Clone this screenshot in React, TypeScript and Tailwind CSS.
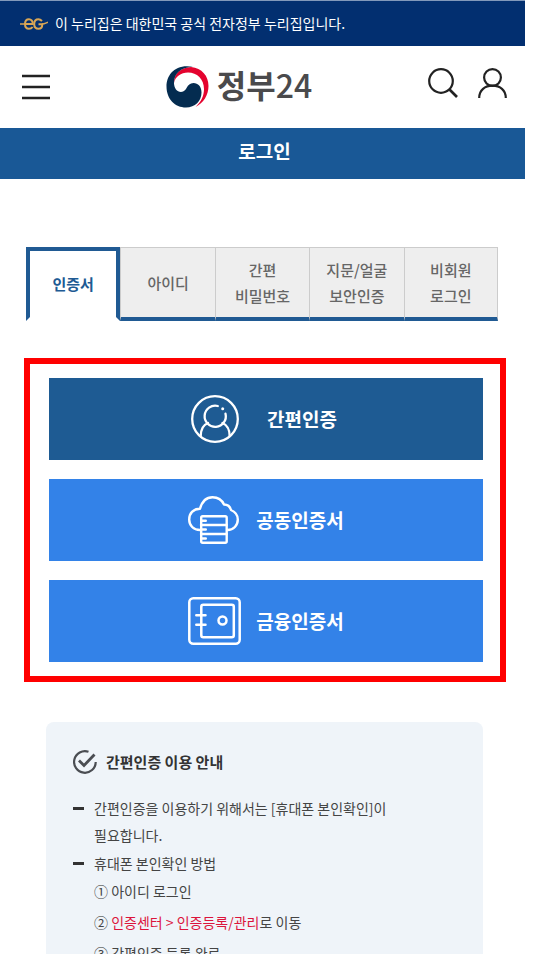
import type { ReactNode } from "react";

const tabs = ["인증서", "아이디", "간편\n비밀번호", "지문/얼굴\n보안인증", "비회원\n로그인"];

const EgMark = () => (
  <svg className="w-7 h-3 shrink-0" viewBox="0 0 28 12" fill="none" stroke="#d9a655" strokeWidth="2" aria-hidden="true">
    <path d="M5 6H12.800C12.800 3 11 1.200 9 1.200C6.500 1.200 5 3.200 5 6C5 8.800 6.500 10.800 9 10.800C10.500 10.800 11.700 10.200 12.600 9" />
    <path d="M22 3C21 2 20 1.200 18.500 1.200C15.800 1.200 14.200 3.200 14.200 6C14.200 8.800 15.800 10.800 18.500 10.800C21 10.800 22.300 8.800 22.300 6.200H18.500" />
    <path d="M0 6H5M22 6C24.500 6 25.500 5.200 28 4.200" strokeWidth="1.500" />
  </svg>
);

const Emblem = () => (
  <svg className="w-[43px] h-[42px]" viewBox="0 0 43 42" aria-hidden="true">
    <path d="M8 17C8 8 14 1.500 25 1C36 2 42.500 10 42.500 20C42.500 29 37.500 37 29.500 41C35 36 38 30 38 23C38 13 31 6.500 22 6.500C15 6.500 9 11 8 17Z" fill="#e4032e" />
    <path d="M27 0.800C9 -2.500 0.500 9 0.500 20.500C0.500 33 9 41.500 20 41.500C29 41.500 35.500 35 35.500 26.500C35.500 20.500 32 17 27.500 17C20 17 21.500 26 15 26C11 26 8 22 8 17C8 8 14 1.500 27 0.800Z" fill="#042c50" />
  </svg>
);

const PersonIcon = () => (
  <svg className="w-12 h-12" viewBox="0 0 48 48" fill="none" stroke="white" strokeWidth="2.300" strokeLinecap="round" aria-hidden="true">
    <circle cx="24" cy="24" r="22.800" />
    <path d="M26.800 11A10.600 10.600 0 1 0 34.500 18.700" />
    <path d="M9.700 41.300C9.700 34.500 12 30 17 28M31.500 28C36 30 38.700 34.500 38.700 41.300" />
    <circle cx="31.700" cy="13.800" r="1.500" fill="white" stroke="none" />
  </svg>
);

const CloudIcon = () => (
  <svg className="w-[51px] h-12" viewBox="0 0 51 48" fill="none" stroke="white" strokeWidth="2.400" strokeLinecap="round" strokeLinejoin="round" aria-hidden="true">
    <path d="M12 34C5.500 34 1.200 29.500 1.200 23.500C1.200 17.500 5 12.800 12 12.800C14 5.500 18 1.200 24.500 1.200C30 1.200 34 4 36 8.500C39.500 8.500 42 10.500 43 14C47.500 16 49.800 19.500 49.800 23.500C49.800 29.500 45.500 34 39.500 34" />
    <rect x="13.200" y="20.200" width="25.500" height="26.600" rx="1.500" />
    <path d="M13 29H38.500M13 38H38.500M14 24.700H17.800M14 33.500H17.800M14 42.500H17.800" />
  </svg>
);

const SafeIcon = () => (
  <svg className="w-[53px] h-12" viewBox="0 0 53 48" fill="none" stroke="white" strokeWidth="2.500" strokeLinecap="round" aria-hidden="true">
    <rect x="1.300" y="1.300" width="50.400" height="45.400" rx="4" />
    <rect x="13.300" y="7.800" width="32.500" height="32.400" rx="2" />
    <circle cx="34.500" cy="23.500" r="4" />
    <path d="M8.300 18.200H17.500M8.300 27.700H17.500" />
  </svg>
);

type CertButtonProps = {
  icon: ReactNode;
  label: string;
  className: string;
};

const CertButton = ({ icon, label, className }: CertButtonProps) => (
  <button
    type="button"
    className={`flex h-[82px] w-full items-center justify-center text-[19px] font-bold text-white ${className}`}
  >
    {icon}
    {label}
  </button>
);

const Header = () => (
  <header>
    <div className="flex h-[46px] items-center gap-[7px] border-t border-[#8299bb] bg-[#022f70] pl-5 text-[14px] text-white">
      <EgMark />
      이 누리집은 대한민국 공식 전자정부 누리집입니다.
    </div>
    <div className="flex h-[82px] items-center justify-between pr-[18px] pl-[22px]">
      <button type="button" aria-label="메뉴">
        <svg className="h-[26px] w-7" viewBox="0 0 28 26" stroke="#222" strokeWidth="2.500" aria-hidden="true">
          <path d="M0 2H28M0 13H28M0 24H28" />
        </svg>
      </button>
      <a href="#" className="flex items-center gap-2 text-[32px] leading-none font-bold text-[#4a4a4c]">
        <Emblem />
        <span className="pb-1.5">정부<span className="font-medium">24</span></span>
      </a>
      <div className="flex items-center gap-5 pb-2">
        <button type="button" aria-label="검색">
          <svg className="h-[30px] w-[30px]" viewBox="0 0 30 30" fill="none" stroke="#222" strokeWidth="2.200" aria-hidden="true">
            <circle cx="13" cy="13" r="11.800" />
            <path d="M21 21L29 29" strokeWidth="2.600" />
          </svg>
        </button>
        <button type="button" aria-label="내 정보">
          <svg className="h-[30px] w-[29px]" viewBox="0 0 29 30" fill="none" stroke="#222" strokeWidth="2.200" aria-hidden="true">
            <circle cx="14.500" cy="9.500" r="8.400" />
            <path d="M1.200 30C1.200 22 7 17.700 14.500 17.700C22 17.700 27.800 22 27.800 30" />
          </svg>
        </button>
      </div>
    </div>
    <h1 className="flex h-[51px] items-center justify-center bg-[#195896] pb-1 pl-1 text-[19px] font-bold text-white">
      로그인
    </h1>
  </header>
);

const LoginTabs = () => (
  <div role="tablist" className="mr-[27px] ml-[26px] mt-[68px] grid grid-cols-5">
    {tabs.map((tab, i) => (
      <button
        key={tab}
        type="button"
        role="tab"
        aria-selected={i === 0}
        className={
          i === 0
            ? "h-[74px] border-4 border-[#205a93] border-b-transparent text-[15px] font-bold text-[#205a93]"
            : "h-[74px] border-t border-b-4 border-l border-[#ccc] border-b-[#205a93] bg-[#eee] text-[15px] leading-[26px] font-medium whitespace-pre-line text-[#666] last:border-r"
        }
      >
        {tab}
      </button>
    ))}
  </div>
);

const Notice = () => (
  <section className="mr-[42px] ml-[46px] mt-10 rounded-lg bg-[#eff4f9] px-[27px] pt-[26px] pb-10 text-[14px] leading-[27px] text-[#444]">
    <h2 className="flex items-center gap-[9px] text-[15px] font-bold text-[#333]">
      <svg className="h-6 w-6" viewBox="0 0 24 24" fill="none" stroke="#4a4d52" strokeWidth="2.200" aria-hidden="true">
        <path d="M15.500 1.800A10.800 10.800 0 1 0 22.700 12" />
        <path d="M6 10.500L11 15.500L21.500 4.500" strokeWidth="2.800" />
      </svg>
      간편인증 이용 안내
    </h2>
    <ul className="mt-5 flex flex-col gap-px">
      <li className="flex gap-[10px]">
        <span className="mt-3 h-[3px] w-[11px] shrink-0 bg-[#333]" />
        <p>간편인증을 이용하기 위해서는 [휴대폰 본인확인]이<br />필요합니다.</p>
      </li>
      <li className="flex gap-[10px]">
        <span className="mt-3 h-[3px] w-[11px] shrink-0 bg-[#333]" />
        <div>
          <p>휴대폰 본인확인 방법</p>
          <ol className="mt-px flex flex-col gap-1">
            <li>① 아이디 로그인</li>
            <li>② <a href="#" className="text-[#dc143c]">인증센터 &gt; 인증등록/관리</a>로 이동</li>
            <li>③ 간편인증 등록 완료</li>
          </ol>
        </div>
      </li>
    </ul>
  </section>
);

export default function App() {
  return (
    <div className="bg-white pr-[9px] font-['Noto_Sans_CJK_KR',sans-serif]">
      <Header />
      <main>
        <LoginTabs />
        <div className="mt-[37px] mr-[19px] ml-6 flex flex-col gap-[19px] border-6 border-[#f00] py-[14px] pr-[17px] pl-[19px]">
          <CertButton icon={<PersonIcon />} label="간편인증" className="gap-7 bg-[#1e5b93] pr-1" />
          <CertButton icon={<CloudIcon />} label="공동인증서" className="gap-[17px] bg-[#3382e8]" />
          <CertButton icon={<SafeIcon />} label="금융인증서" className="gap-[15px] bg-[#3382e8]" />
        </div>
        <Notice />
      </main>
    </div>
  );
}
